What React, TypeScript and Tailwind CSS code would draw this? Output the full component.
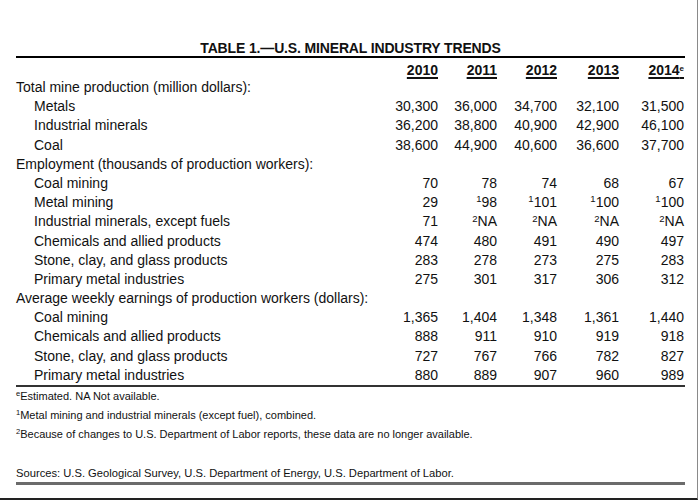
type Cell = string | [string, string];

type Row = { label: string; values?: Cell[]; head?: boolean };

const years = ["2010", "2011", "2012", "2013", "2014"];

const rows: Row[] = [
  { label: "Total mine production (million dollars):", head: true },
  { label: "Metals", values: ["30,300", "36,000", "34,700", "32,100", "31,500"] },
  { label: "Industrial minerals", values: ["36,200", "38,800", "40,900", "42,900", "46,100"] },
  { label: "Coal", values: ["38,600", "44,900", "40,600", "36,600", "37,700"] },
  { label: "Employment (thousands of production workers):", head: true },
  { label: "Coal mining", values: ["70", "78", "74", "68", "67"] },
  { label: "Metal mining", values: ["29", ["1", "98"], ["1", "101"], ["1", "100"], ["1", "100"]] },
  { label: "Industrial minerals, except fuels", values: ["71", ["2", "NA"], ["2", "NA"], ["2", "NA"], ["2", "NA"]] },
  { label: "Chemicals and allied products", values: ["474", "480", "491", "490", "497"] },
  { label: "Stone, clay, and glass products", values: ["283", "278", "273", "275", "283"] },
  { label: "Primary metal industries", values: ["275", "301", "317", "306", "312"] },
  { label: "Average weekly earnings of production workers (dollars):", head: true },
  { label: "Coal mining", values: ["1,365", "1,404", "1,348", "1,361", "1,440"] },
  { label: "Chemicals and allied products", values: ["888", "911", "910", "919", "918"] },
  { label: "Stone, clay, and glass products", values: ["727", "767", "766", "782", "827"] },
  { label: "Primary metal industries", values: ["880", "889", "907", "960", "989"] },
];

const grid = "grid grid-cols-[362px_60px_59px_60px_62px_65px_2px]";

const Value = ({ cell }: { cell: Cell }) =>
  typeof cell === "string" ? (
    <span>{cell}</span>
  ) : (
    <span>
      <sup className="text-[9.5px]">{cell[0]}</sup>
      {cell[1]}
    </span>
  );

export default function App() {
  return (
    <div className="w-[700px] h-[500px] bg-white font-['Liberation_Sans',Arial,sans-serif] text-[#111]">
      <div className="w-[698px] h-[500px] border-r border-r-[#8a8a8a] border-b-2 border-b-[#222] pl-4 pr-[12px] pt-[40px]">
        <h1 className="text-center text-[14px] leading-[16px] font-bold tracking-[-0.15px]">
          TABLE 1.—U.S. MINERAL INDUSTRY TRENDS
        </h1>
        <div className="border-t-2 border-black" />

        <div className={`${grid} pt-[4px] h-[20px] text-[14px] leading-[16px] font-bold`}>
          <div />
          {years.map((y) => (
            <div key={y} className="text-right">
              <span className="underline decoration-[1.5px] underline-offset-[2px]">
                {y}
                {y === "2014" && <sup className="text-[8px]">e</sup>}
              </span>
            </div>
          ))}
          <div />
        </div>

        <div className="text-[14px]">
          {rows.map((r, i) =>
            r.head ? (
              <div key={i} className="h-[19.2px] leading-[19.2px] whitespace-nowrap">
                {r.label}
              </div>
            ) : (
              <div key={i} className={`${grid} h-[19.2px] leading-[19.2px]`}>
                <div className="pl-[18px] whitespace-nowrap">{r.label}</div>
                {r.values!.map((v, j) => (
                  <div key={j} className="text-right">
                    <Value cell={v} />
                  </div>
                ))}
                <div />
              </div>
            )
          )}
        </div>
        <div className="border-t-2 border-[#333]" />

        <div className="text-[11px] leading-[19px] whitespace-nowrap">
          <p>
            <sup className="text-[7.5px]">e</sup>Estimated. NA Not available.
          </p>
          <p>
            <sup className="text-[7.5px]">1</sup>Metal mining and industrial minerals (except fuel), combined.
          </p>
          <p>
            <sup className="text-[7.5px]">2</sup>Because of changes to U.S. Department of Labor reports, these data are no longer
            available.
          </p>
          <p className="mt-[20px] leading-[18px] text-[11.2px]">
            Sources: U.S. Geological Survey, U.S. Department of Energy, U.S. Department of Labor.
          </p>
        </div>
        <div className="border-t-[3px] border-[#6b6b6b]" />
      </div>
    </div>
  );
}
